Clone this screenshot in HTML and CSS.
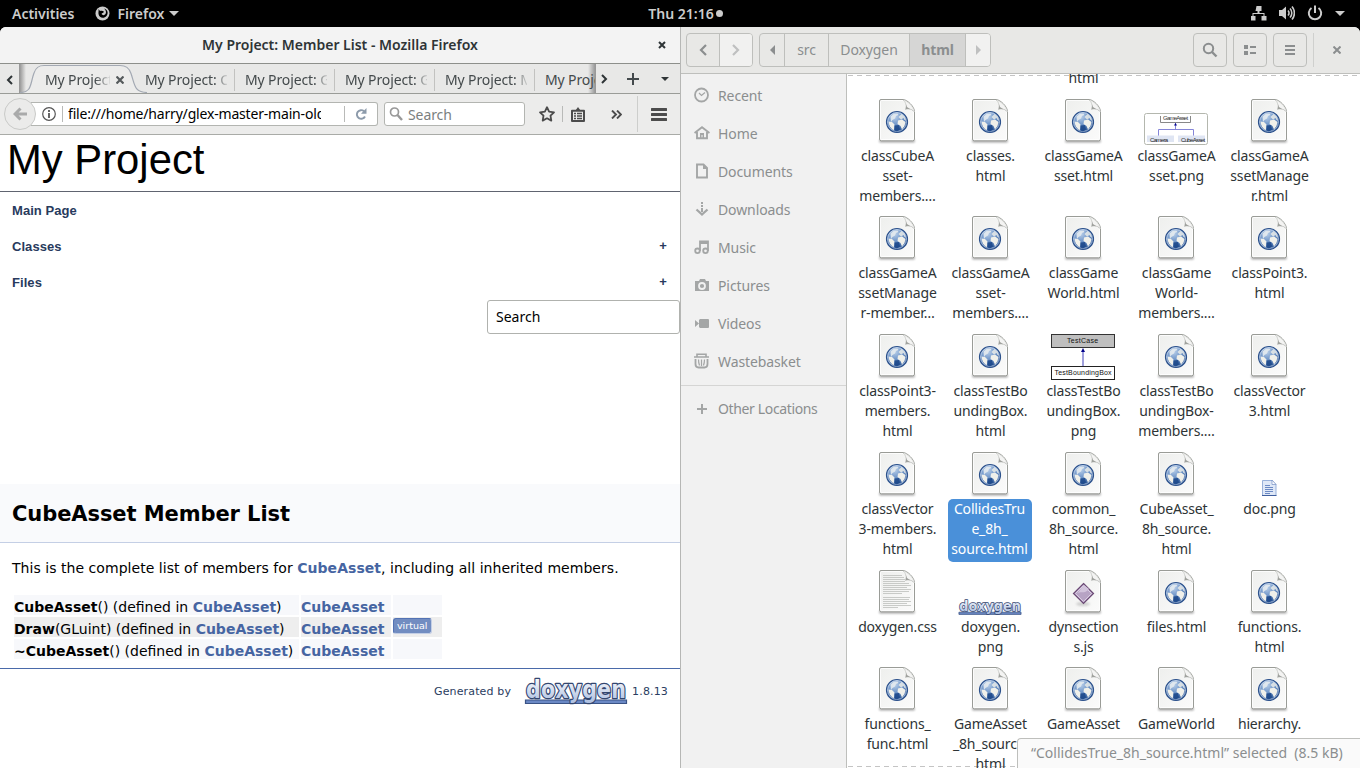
FILE: index.html
```html
<!DOCTYPE html>
<html lang="en">
<head>
<meta charset="utf-8">
<title>My Project: Member List</title>
<link rel="stylesheet" href="styles.css">
</head>
<body>
<svg class="defs" width="0" height="0" aria-hidden="true">
  <defs>
    <linearGradient id="paper" x1="0" y1="0" x2="1" y2="1"><stop offset="0" stop-color="#eeefed"/><stop offset="1" stop-color="#fbfbfb"/></linearGradient>
    <radialGradient id="sea" cx=".4" cy=".25" r=".8"><stop offset="0" stop-color="#b9cfe9"/><stop offset=".5" stop-color="#6a91c6"/><stop offset="1" stop-color="#1f4a8c"/></radialGradient>
    <linearGradient id="logo" x1="0" y1="0" x2="0" y2="1"><stop offset="0" stop-color="#ffffff"/><stop offset="1" stop-color="#a9bcdf"/></linearGradient>
    <filter id="soft" x="-20%" y="-200%" width="140%" height="500%"><feGaussianBlur stdDeviation="1"/></filter>
    <symbol id="page" viewBox="0 0 48 48">
      <rect x="6" y="41.500" width="36" height="3" rx="1.500" fill="#000" opacity=".35" filter="url(#soft)"/>
      <path d="M8 1.500h22c4 0 11.500 7 11.500 12v27.500a1.800 1.800 0 0 1-1.800 1.800H8.300a1.800 1.800 0 0 1-1.800-1.800V3A1.500 1.500 0 0 1 8 1.500z" fill="url(#paper)" stroke="#9a9c97"/>
      <path d="M8.500 2.500h21.500c3 0 10.500 6.500 10.500 11v27a1 1 0 0 1-1 1H8.500a1 1 0 0 1-1-1V3.500z" fill="none" stroke="#fff" opacity=".8"/>
      <path d="M30 2c3 2 3.500 6 2.500 9.500 3-1 7-.5 9 2.500C40.500 8 34 2.500 30 2z" fill="#f4f4f3" stroke="#c3c5c1" stroke-width=".6"/>
      <path d="M32.500 11.500C33.500 8 33 5.500 32 3.500L34 9l7 4.500c-2.500-2.500-5.500-2.800-8.500-2z" fill="#9fa19d"/>
    </symbol>
    <symbol id="html" viewBox="0 0 48 48">
      <use href="#page"/>
      <circle cx="24" cy="24" r="10.500" fill="url(#sea)" stroke="#2d528c" stroke-width="1.200"/>
      <circle cx="24" cy="24" r="9.400" fill="none" stroke="#e4edf8" stroke-width=".8" opacity=".75"/>
      <path d="M17.500 18.500l3-2.500 4-.6 1 1.600-2.500 1-1 2.500-2.500 1.500-1.500 2z" fill="#e9edf0" opacity=".85"/>
      <path d="M15.500 23.500l3.500.5 2.500 2.500-.5 5.500-1.500-.5c-2.200-1.800-3.700-4.500-4-8z" fill="#f0f0ea"/>
      <path d="M25.500 19l3-3 3 2.500 1.500 4-1.500-.5-1-2-2.500 1.500z" fill="#f0f0ea" opacity=".8"/>
      <path d="M25 22.500l4-1 3.500 2.500-1 4-2.500 3.500-1.500-3.500-3-2z" fill="#f0f0ea"/>
      <path d="M21.500 27.500l4.500-.5 1 4.500-3 2-2.500-1z" fill="#1b4788" opacity=".85"/>
    </symbol>
    <symbol id="css" viewBox="0 0 48 48">
      <use href="#page"/>
      <path d="M10 6.500h19M10 8.500h21M10 10.500h22M10 12.500h22M10 14.500h26M10 16.500h28M10 18.500h24M10 20.500h28M10 22.500h26M10 24.500h19M10 28.500h27M10 30.500h26M10 32.500h28M10 34.500h24M10 36.500h28M10 38.500h15" stroke="#c3c5c2" stroke-width=".9"/>
    </symbol>
    <symbol id="js" viewBox="0 0 48 48">
      <use href="#page"/>
      <ellipse cx="24" cy="35" rx="7" ry="2" fill="#888" opacity=".35" filter="url(#soft)"/>
      <path d="M24.500 14.500L34.500 24.500L24.500 34.500L14.500 24.500z" fill="#b7a3c4" stroke="#6b4a74" stroke-width="1.200"/>
      <path d="M24.500 16.500L32.500 24.500L24.500 32.500L16.500 24.500z" fill="none" stroke="#dccfe4" stroke-width="1"/>
      <path d="M18 25c4-4 7 1 12-5l-5-4z" fill="#d2c4dc"/>
    </symbol>
    <symbol id="docpng" viewBox="0 0 48 48">
      <path d="M17.500 29.500h9.500l4 4v11H17.500z" fill="#dfe8f7" stroke="#8fa9d6" stroke-width=".9"/>
      <path d="M27 29v4.500h4z" fill="#fff" stroke="#7590c4" stroke-width=".7"/>
      <path d="M20 34.500h5M20 36.500h8M20 38.500h8M20 40.500h8M20 42.500h5" stroke="#5f7fbd" stroke-width=".9"/>
      <path d="M17 44.500h14.500" stroke="#3f5f9f"/>
    </symbol>
    <symbol id="doxygen" viewBox="0 0 104 29">
      <path d="M1.500 23h101v3.500h-101z" fill="#6a88c4" stroke="#3a5385" stroke-width="1.200"/>
      <text x="2" y="21" textLength="100" lengthAdjust="spacingAndGlyphs" font-family="DejaVu Sans" font-weight="bold" font-size="24" fill="url(#logo)" stroke="#33466f" stroke-width="2.600" stroke-linejoin="round" paint-order="stroke">doxygen</text>
    </symbol>
  </defs>
</svg>

<div class="desktop">
  <header class="topbar">
    <div class="top-left">
      <span class="activities">Activities</span>
      <svg class="fox" width="15" height="15" viewBox="0 0 15 15"><circle cx="7.500" cy="7.500" r="7" fill="#ccc"/><path d="M3.500 3L5 5c2-.5 3 0 4 .8C8.500 7 7 7 6.500 8c1 1.500 3 1.500 4 0 1-1.800.5-4-1.500-5.500 4 1 4.500 5 2.500 7.500-2.500 3-7.500 2-8-2C3.300 6 3.800 5 3.500 3z" fill="#000"/></svg>
      <span class="appname">Firefox</span>
      <i class="caret"></i>
    </div>
    <div class="clock">Thu 21:16<i class="dot"></i></div>
    <div class="top-right">
      <svg width="16" height="16" viewBox="0 0 16 16" fill="#ccc"><path d="M5.500 1h5v5h-2v2h5v3h2v4.500h-5V11h2V9h-10v2h2v4.500h-5V11h2V8h5V6h-2z"/></svg>
      <svg width="16" height="16" viewBox="0 0 16 16"><path d="M0 5h3l4-3.500v13L3 11H0z" fill="#ccc"/><path d="M9 5.500a3.500 3.500 0 0 1 0 5M11 3.500a6.500 6.500 0 0 1 0 9M13 1.500a10 10 0 0 1 0 13" fill="none" stroke="#ccc" stroke-width="1.600"/></svg>
      <svg width="16" height="16" viewBox="0 0 16 16" fill="none" stroke="#ccc" stroke-width="2"><path d="M4.500 3a6.200 6.200 0 1 0 7 0M8 .5v7.500"/></svg>
      <i class="caret"></i>
    </div>
  </header>

  <div class="windows">
    <section class="firefox">
      <div class="ff-title"><span>My Project: Member List - Mozilla Firefox</span>
        <svg width="8" height="8" viewBox="0 0 8 8"><path d="M1 1l6 6M7 1L1 7" stroke="#2e3436" stroke-width="2"/></svg>
      </div>
      <div class="tabs">
        <div class="scroll-l"><svg width="7" height="10" viewBox="0 0 7 10"><path d="M6 1L2 5l4 4" fill="none" stroke="#2e3436" stroke-width="2"/></svg></div>
        <div class="tab-strip">
          <div class="tab active">
            <svg class="tab-shape" width="130" height="30" viewBox="0 0 130 30"><path d="M0 29C12 29 10 20 14 9c2-6 5-7.500 10-7.500h76c6 0 9 2 11 8C115 21 114 28.500 127 29v1H0z" fill="#ececeb"/><path d="M0 28.500C12 28.500 10 20 14 9c2-6 5-7.500 10-7.500h76c6 0 9 2 11 8C115 21 114 28 127 28.500" fill="none" stroke="#a3a9b3" stroke-width="1.200"/></svg>
            <span class="tab-label">My Project:</span>
            <svg class="tab-x" width="8" height="8" viewBox="0 0 8 8"><path d="M.5 .5l7 7M7.500 .5l-7 7" stroke="#555a5c" stroke-width="2.200"/></svg>
          </div>
          <div class="tab"><span class="tab-label">My Project: C</span></div>
          <div class="tab"><span class="tab-label">My Project: G</span></div>
          <div class="tab"><span class="tab-label">My Project: G</span></div>
          <div class="tab"><span class="tab-label">My Project: M</span></div>
          <div class="tab last"><span class="tab-label">My Project</span></div>
        </div>
        <div class="tab-tools">
          <svg width="7" height="10" viewBox="0 0 7 10"><path d="M1 1l4 4-4 4" fill="none" stroke="#2e3436" stroke-width="2"/></svg>
          <svg width="12" height="12" viewBox="0 0 12 12"><path d="M6 0v12M0 6h12" stroke="#444a4d" stroke-width="2"/></svg>
          <i class="caret dark"></i>
        </div>
      </div>
      <div class="navbar">
        <div class="back"><svg width="14" height="14" viewBox="0 0 14 14"><path d="M7.500 1.500L2 7l5.500 5.500M2 7h12" fill="none" stroke="#a9aaaa" stroke-width="3"/></svg></div>
        <div class="urlbar">
          <svg width="14" height="14" viewBox="0 0 14 14"><circle cx="7" cy="7" r="6.300" fill="none" stroke="#555" stroke-width="1.200"/><path d="M7 6v5M7 3v2" stroke="#555" stroke-width="1.800"/></svg>
          <i class="sep"></i><span class="url">file:///home/harry/glex-master-main-old</span><i class="sep"></i>
          <svg class="reload" width="12" height="12" viewBox="0 0 12 12"><path d="M9 3.200A4.300 4.300 0 1 0 10 8.500" fill="none" stroke="#8d9bab" stroke-width="1.900"/><path d="M11.500 0v5.800H6z" fill="#8d9bab"/></svg>
        </div>
        <div class="searchbar"><svg width="14" height="14" viewBox="0 0 14 14"><circle cx="5.500" cy="5" r="4" fill="none" stroke="#999" stroke-width="1.700"/><path d="M8.500 8l4.500 5" stroke="#999" stroke-width="2.400"/></svg><span>Search</span></div>
        <svg class="star" width="16" height="16" viewBox="0 0 16 16"><path d="M8 1.200l2.100 4.400 4.900.7-3.500 3.400.8 4.900L8 12.300l-4.300 2.300.8-4.900L1 6.300l4.900-.7z" fill="none" stroke="#4c4c4c" stroke-width="1.800" stroke-linejoin="round"/></svg>
        <i class="sep nav1"></i>
        <svg class="clip" width="14" height="15" viewBox="0 0 14 15"><path d="M1 3.800h12v10.200H1z" fill="none" stroke="#4c4c4c" stroke-width="2" stroke-linejoin="round"/><path d="M4.500 3.500L7 0l2.500 3.500z" fill="#4c4c4c"/><path d="M3 6.500h2m1 0h5M3 9h2m1 0h5M3 11.500h2m1 0h5" stroke="#4c4c4c" stroke-width="1.300"/></svg>
        <svg class="more" width="11" height="9" viewBox="0 0 11 9"><path d="M1 .5l4 4-4 4M6 .5l4 4-4 4" fill="none" stroke="#4c4c4c" stroke-width="1.900"/></svg>
        <i class="sep nav2"></i>
        <svg class="burger" width="16" height="13" viewBox="0 0 16 13"><path d="M1 1.500h14M1 6.500h14M1 11.500h14" stroke="#4c4c4c" stroke-width="3" stroke-linecap="round"/></svg>
      </div>

      <main class="doc">
        <h1 class="project">My Project</h1>
        <nav class="menu">
          <div>Main Page</div>
          <div>Classes<b>+</b></div>
          <div>Files<b>+</b></div>
        </nav>
        <div class="docsearch">Search</div>
        <div class="doc-head"><h2>CubeAsset Member List</h2></div>
        <p class="intro">This is the complete list of members for <a>CubeAsset</a>, including all inherited members.</p>
        <div class="members">
          <span><b>CubeAsset</b>() (defined in <a>CubeAsset</a>)</span><span><a>CubeAsset</a></span><span></span>
          <span class="alt"><b>Draw</b>(GLuint) (defined in <a>CubeAsset</a>)</span><span class="alt"><a>CubeAsset</a></span><span class="alt"><em>virtual</em></span>
          <span><b>~CubeAsset</b>() (defined in <a>CubeAsset</a>)</span><span><a>CubeAsset</a></span><span></span>
        </div>
        <footer class="generated"><span>Generated by</span><svg width="104" height="29"><use href="#doxygen"/></svg><span>1.8.13</span></footer>
      </main>
    </section>

    <section class="files">
      <div class="headerbar">
        <div class="group">
          <span class="w33"><svg width="8" height="12" viewBox="0 0 8 12"><path d="M7 1L2 6l5 5" fill="none" stroke="#8b8e8f" stroke-width="2.200"/></svg></span>
          <span class="w33 off"><svg width="8" height="12" viewBox="0 0 8 12"><path d="M1 1l5 5-5 5" fill="none" stroke="#bfc0c0" stroke-width="2.200"/></svg></span>
        </div>
        <div class="group path">
          <span class="w25"><svg width="5" height="10" viewBox="0 0 5 10"><path d="M5 0v10L0 5z" fill="#8b8e8f"/></svg></span>
          <span class="w44">src</span><span class="w81">Doxygen</span><span class="w56 on">html</span>
          <span class="w25 off"><svg width="5" height="10" viewBox="0 0 5 10"><path d="M0 0v10l5-5z" fill="#bfc0c0"/></svg></span>
        </div>
        <div class="tools">
          <span><svg width="16" height="16" viewBox="0 0 16 16" fill="none" stroke="#8b8e8f"><circle cx="6.500" cy="6.500" r="4.700" stroke-width="2"/><path d="M10 10l4.500 4.500" stroke-width="2.400"/></svg></span>
          <span><svg width="12" height="10" viewBox="0 0 12 10" fill="#8b8e8f"><path d="M0 0h4v4H0zM0 6h4v4H0zM6 1h6v2H6zM6 7h6v2H6z"/></svg></span>
          <span><svg width="10" height="10" viewBox="0 0 10 10" fill="#8b8e8f"><path d="M0 0h10v2H0zM0 4h10v2H0zM0 8h10v2H0z"/></svg></span>
        </div>
        <i class="hsep"></i>
        <svg class="close" width="8" height="8" viewBox="0 0 8 8"><path d="M.5 .5l7 7M7.500 .5l-7 7" stroke="#8b8e8f" stroke-width="2"/></svg>
      </div>
      <div class="files-body">
        <aside class="sidebar">
          <div><svg width="16" height="16" viewBox="0 0 16 16" fill="none" stroke="#a4a6a6"><circle cx="7.500" cy="8" r="6.500" stroke-width="1.800"/><path d="M5 6l2.500 2.500 3.500-3" stroke-width="1.200"/></svg>Recent</div>
          <div><svg width="16" height="16" viewBox="0 0 16 16"><path d="M.5 8L8 2.200 15.500 8M3 7v6.200h10V7" fill="none" stroke="#a4a6a6" stroke-width="1.900"/><path d="M6 8h4v5H8.500v-3h-1v3H6z" fill="#a4a6a6"/></svg>Home</div>
          <div><svg width="16" height="16" viewBox="0 0 16 16"><path d="M3 1.500h6.500L13 5v9.500H3z" fill="none" stroke="#a4a6a6" stroke-width="1.900"/><path d="M9 1v5h5z" fill="#a4a6a6"/></svg>Documents</div>
          <div><svg width="16" height="16" viewBox="0 0 16 16" fill="none" stroke="#a4a6a6"><path d="M8 1v2M8 4v2M8 7v4" stroke-width="2"/><path d="M2.500 8.500L8 13.500l5.500-5" stroke-width="2.300"/></svg>Downloads</div>
          <div><svg width="16" height="16" viewBox="0 0 16 16" fill="none" stroke="#a4a6a6" stroke-width="1.800"><path d="M6 12V2.500h8V12M6 4h8"/><circle cx="3.500" cy="11.800" r="2.300"/><circle cx="11.500" cy="11.800" r="2.300"/></svg>Music</div>
          <div><svg width="16" height="16" viewBox="0 0 16 16"><path d="M1 4h4l1-2h5l1 2h3v10H1z" fill="#a4a6a6"/><circle cx="8" cy="9" r="3" fill="#a4a6a6" stroke="#f1f1f1" stroke-width="1.800"/></svg>Pictures</div>
          <div><svg width="16" height="16" viewBox="0 0 16 16" fill="#a4a6a6"><path d="M1 5l4 3.500L1 12zM5 5l1-1h8.500l.5 1v7.500l-1 .5H6l-1-1z"/></svg>Videos</div>
          <div><svg width="16" height="16" viewBox="0 0 16 16" fill="none" stroke="#a4a6a6"><path d="M3 3.500V1.200h9v2.300M0 4h15" stroke-width="1.600"/><path d="M1.500 6v5c0 2.500 1 3.500 3 3.500h6c2 0 3-1 3-3.500V6" stroke-width="1.800"/><path d="M4.500 6.500c0 2 .3 4 1 6M7.500 6.500v6.500M10.500 6.500c0 2-.3 4-1 6" stroke-width="1.200"/></svg>Wastebasket</div>
          <div class="other"><svg width="16" height="16" viewBox="0 0 16 16"><path d="M8 3v10M3 8h10" stroke="#a4a6a6" stroke-width="2"/></svg>Other Locations</div>
        </aside>
        <div class="canvas">
          <div class="cut">html</div>
          <div class="grid" id="grid"></div>
          <div class="status">“CollidesTrue_8h_source.html” selected&nbsp; (8.5 kB)</div>
        </div>
      </div>
    </section>
  </div>
</div>
<script src="files.js"></script>
</body>
</html>
```
FILE: styles.css
```css
* { box-sizing: border-box; }
body { margin: 0; font-family: "Noto Sans", "Open Sans", sans-serif; font-size: 14px; color: #2e3436; background: #000; overflow: hidden; }
svg { display: block; flex: none; }
.defs { position: absolute; }
i { display: block; flex: none; }
.desktop { width: 1360px; height: 768px; display: flex; flex-direction: column; overflow: hidden; white-space: nowrap; }

.topbar { height: 27px; flex: none; background: #000; color: #ccc; font-weight: 600; display: grid; grid-template-columns: 1fr auto 1fr; align-items: center; padding: 0 15px 1px 12px; }
.top-left, .top-right { display: flex; align-items: center; }
.fox { margin: 0 7px 0 21px; }
.caret { border: 5px solid transparent; border-top-color: #ccc; border-bottom: 0; margin-left: 5px; }
.caret.dark { border-width: 4px 4px 0; border-top-color: #2e3436; margin: 0; }
.clock { display: flex; align-items: center; margin-left: 14px; }
.dot { width: 7px; height: 7px; border-radius: 50%; background: #ccc; margin-left: 2px; }
.top-right { justify-content: flex-end; gap: 12px; }
.top-right svg { margin-right: 1px; margin-left: -1px; }
.top-right .caret { margin-left: -1px; }

.windows { flex: 1; display: flex; min-height: 0; }
.firefox { width: 680px; background: #fff; display: flex; flex-direction: column; border-radius: 6px 0 0 0; overflow: hidden; }
.ff-title { height: 37px; background: #f3f3f3; border-bottom: 1px solid #8d8f8b; display: grid; grid-template-columns: 1fr 8px; align-items: center; padding: 0 14px 1px 22px; text-align: center; font-weight: 600; }
.tabs { height: 30px; background: #e8e8e7; border-bottom: 1px solid #9a9c98; display: flex; }
.scroll-l { width: 20px; padding: 11px 0 0 6px; border-right: 1px solid #999; }
.tab-strip { width: 575px; display: flex; overflow: hidden; background: linear-gradient(90deg, #999, #e8e8e700 6px), linear-gradient(270deg, #999, #e8e8e700 7px); }
.tab { width: 100px; flex: none; position: relative; padding: 6px 0 0 10px; line-height: 20px; letter-spacing: -.12px; }
.tab + .tab { background: linear-gradient(#c2c2c0, #c2c2c0) right 5px / 1px 22px no-repeat; }
.tab.active { width: 115px; padding-left: 25px; }
.tab.last { background: none; }
.tab-shape { position: absolute; left: 0; top: 0; }
.tab-label { display: block; position: relative; width: 82px; overflow: hidden; color: #444a4c; -webkit-mask-image: linear-gradient(90deg, #000 70px, transparent 84px); mask-image: linear-gradient(90deg, #000 70px, transparent 84px); }
.active .tab-label { width: 65px; -webkit-mask-image: linear-gradient(90deg, #000 50px, transparent 67px); mask-image: linear-gradient(90deg, #000 50px, transparent 67px); }
.last .tab-label { -webkit-mask-image: none; mask-image: none; }
.tab-x { position: absolute; left: 96px; top: 12px; }
.tab-tools { flex: 1; display: flex; align-items: center; gap: 19px; padding-left: 5px; border-left: 1px solid #999; }
.tab-tools .caret { margin-left: 3px; }

.navbar { height: 41px; background: #ececeb; border-bottom: 1px solid #a9aba7; display: flex; align-items: center; padding-left: 4px; }
.back { width: 32px; height: 32px; border: 1px solid #c9cac8; border-radius: 50%; background: #ebebea; display: grid; place-items: center; flex: none; z-index: 1; }
.urlbar { width: 347px; height: 24px; margin-left: -5px; border: 1px solid #b3b5b1; border-left: 0; border-radius: 0 3px 3px 0; background: #fff; display: flex; align-items: center; padding-left: 11px; color: #000; }
.sep { width: 1px; height: 16px; background: #b9bab8; }
.urlbar .sep { margin-left: 6px; }
.urlbar .url { width: 253px; flex: none; overflow: hidden; margin-left: 5px; line-height: 20px; letter-spacing: -.18px; }
.urlbar .url + .sep { margin-left: 23px; }
.reload { margin-left: 10px; }
.searchbar { width: 141px; height: 24px; margin-left: 6px; border: 1px solid #b3b5b1; border-radius: 3px; background: #fff; display: flex; align-items: center; gap: 5px; padding-left: 4px; color: #7b7f80; letter-spacing: -.1px; }
.star { margin-left: 14px; }
.nav1 { margin: 0 8px 0 7px; }
.more { margin-left: 26px; }
.nav2 { height: 36px; margin: 0 13px 0 15px; opacity: .6; }

.doc { flex: 1; font-family: "DejaVu Sans", sans-serif; font-size: 14px; color: #000; display: flex; flex-direction: column; }
.doc a { color: #4665a2; font-weight: bold; }
.project { margin: 0; height: 57px; padding: 1px 0 0 7px; border-bottom: 1px solid #606470; font: 41.8px/47px "Liberation Sans", Arial, sans-serif; }
.menu { font: bold 13px/36px "Liberation Sans", Arial, sans-serif; color: #283a5d; padding: 1px 13px 0 12px; letter-spacing: .06px; }
.menu div { display: flex; justify-content: space-between; }
.menu b { line-height: 34px; }
.docsearch { width: 193px; height: 34px; margin-top: -1px; align-self: flex-end; border: 1px solid #b0b2ae; border-radius: 3px; padding-left: 8px; font: 14px/31px "Noto Sans", sans-serif; background: #fff; }
.doc-head { height: 59px; margin-top: 150px; background: #f9fafc; border-bottom: 1px solid #c4cfe5; padding-left: 12px; }
.doc-head h2 { margin: 0; font-size: 21px; line-height: 60px; letter-spacing: -.08px; height: 58px; }
.intro { margin: 15px 0 17px 12px; line-height: 20px; letter-spacing: .042px; }
.members { display: grid; grid-template-columns: 285px 90px 49px; grid-auto-rows: 20px; gap: 2px; margin-left: 14px; line-height: 24.500px; }
.members span { background: #f7f8fb; }
.members .alt { background: #eee; }
.members em { display: block; width: 39px; height: 16px; margin-top: 1px; background: #728dc1; border: 1px solid #5373b4; border-right-color: #c4cfe5; border-bottom-color: #c4cfe5; border-radius: 3px; color: #fff; font: 9.500px/14px "DejaVu Sans", sans-serif; padding-left: 3px; }
.generated { margin-top: 9px; border-top: 1px solid #4a6aaa; display: flex; justify-content: flex-end; align-items: center; padding: 8px 12px 0 0; font-size: 11px; color: #2a3d61; letter-spacing: .15px; }
.generated svg { margin: 0 4px 0 13px; }

.files { width: 680px; border-left: 1px solid #b6b7b5; display: flex; flex-direction: column; border-radius: 0 6px 0 0; overflow: hidden; color: #8b8e8f; background: #fff; letter-spacing: -.1px; }
.headerbar { height: 47px; flex: none; background: #e8e8e6; border-bottom: 1px solid #bebfbc; display: flex; align-items: center; padding: 0 19px 0 5px; }
.group { display: flex; border: 1px solid #bebfbc; border-radius: 4px; height: 34px; overflow: hidden; margin-right: 6px; }
.group span { display: grid; place-items: center; border-left: 1px solid #bebfbc; padding-bottom: 1px; }
.group span:first-child { border-left: 0; }
.w33 { width: 33px; }
.group .w33:first-child { width: 32px; }
.w25 { width: 25px; }
.group .w25:first-child { width: 24px; }
.w44 { width: 44px; }
.w81 { width: 81px; }
.w56 { width: 56px; }
.off { background: #f1f1f0; }
.on { background: #d6d6d5; font-weight: bold; }
.tools { display: flex; gap: 6px; margin-left: auto; }
.tools span { width: 34px; height: 34px; border: 1px solid #bebfbc; border-radius: 4px; display: grid; place-items: center; }
.hsep { width: 1px; height: 34px; background: #cfd0ce; margin: 0 19px 0 6px; }
.files-body { flex: 1; display: flex; min-height: 0; }
.sidebar { width: 166px; flex: none; background: #f1f1f1; border-right: 1px solid #bebfbc; padding-top: 2px; }
.sidebar div { height: 38px; display: flex; align-items: center; gap: 8px; padding-left: 13px; }
.sidebar .other { margin-top: 5px; height: 46px; border-top: 1px solid #d5d5d4; letter-spacing: -.36px; }
.canvas { flex: 1; position: relative; overflow: hidden; background: repeating-linear-gradient(90deg, #c4c4c4 0 5px, transparent 5px 9px) 1px 1px / 100% 1px no-repeat, repeating-linear-gradient(90deg, #c4c4c4 0 5px, transparent 5px 9px) 1px 692px / 100% 1px no-repeat, #fff; color: #2e3436; padding-left: 3px; }
.cut { height: 24px; line-height: 20px; width: 93px; margin-left: 187px; text-align: center; margin-top: -6px; }
.grid { display: grid; grid-template-columns: repeat(5, 93px); grid-template-rows: 117px 118px 118px 118px 97px 120px; margin-top: 6px; }
.item { display: flex; flex-direction: column; align-items: center; line-height: 20px; text-align: center; }
.item .label { padding-left: 2px; letter-spacing: -.15px; }
.item.selected .label { width: 84px; padding-left: 0; background: #4a90d9; color: #fff; border-radius: 5px; height: 63px; }
.thumb { width: 64px; height: 48px; display: flex; align-items: flex-end; justify-content: center; }
.thumb .raised { margin-bottom: 1px; }
.status { position: absolute; right: 0; bottom: 0; width: 343px; height: 30px; background: #fafafa; border: 1px solid #bebfbc; border-right: 0; border-bottom: 0; border-radius: 4px 0 0 0; color: #8b8e8f; line-height: 28px; padding-left: 13px; letter-spacing: 0; }
```
FILE: files.js
```js
// Each entry: icon name, then the label with "|" at its line breaks.
const files = [
  ["html", "classCubeA|sset-|members.…"], ["html", "classes.|html"], ["html", "classGameA|sset.html"], ["asset", "classGameA|sset.png"], ["html", "classGameA|ssetManage|r.html"],
  ["html", "classGameA|ssetManage|r-member…"], ["html", "classGameA|sset-|members.…"], ["html", "classGame|World.html"], ["html", "classGame|World-|members.…"], ["html", "classPoint3.|html"],
  ["html", "classPoint3-|members.|html"], ["html", "classTestBo|undingBox.|html"], ["test", "classTestBo|undingBox.|png"], ["html", "classTestBo|undingBox-|members.…"], ["html", "classVector|3.html"],
  ["html", "classVector|3-members.|html"], ["html", "CollidesTru|e_8h_|source.html", true], ["html", "common_|8h_source.|html"], ["html", "CubeAsset_|8h_source.|html"], ["docpng", "doc.png"],
  ["css", "doxygen.css"], ["logo", "doxygen.|png"], ["js", "dynsection|s.js"], ["html", "files.html"], ["html", "functions.|html"],
  ["html", "functions_|func.html"], ["html", "GameAsset|_8h_source.|html"], ["html", "GameAsset"], ["html", "GameWorld"], ["html", "hierarchy."]
];
const thumbs = {
  asset: '<svg width="64" height="33" viewBox="0 0 64 33" font-family="Liberation Sans" font-size="6"><rect x=".5" y=".5" width="63" height="31" rx="2" fill="#fff" stroke="#b4b7ae"/><path d="M16.500 3v6.500h30V3" fill="none" stroke="#888"/><text x="19" y="6.500" textLength="25" fill="#333">GameAsset</text><path d="M31.500 10v6.500M14.500 23v-6.500h35V23" fill="none" stroke="#8585d8"/><path d="M30 12.500l1.500-2.500 1.500 2.500z" fill="#00008b"/><path d="M3 22.500h27V29H3zM34 22.500h27V29H34z" fill="#dfe5f3"/><text x="6" y="28.500" textLength="18" fill="#222">Camera</text><text x="37" y="28.500" textLength="24" fill="#222">CubeAsset</text></svg>',
  test: '<svg class="raised" width="64" height="46" viewBox="0 0 64 46" font-family="Liberation Sans" font-size="7"><rect x=".5" y=".5" width="63" height="13" fill="#bfbfbf" stroke="#333"/><text x="16" y="9" textLength="31" fill="#111">TestCase</text><path d="M32 16v16" stroke="#8080d0" stroke-width="1.500"/><path d="M30 18l2-4 2 4z" fill="#00008b"/><rect x=".5" y="32.500" width="63" height="13" fill="#fff" stroke="#222"/><text x="3.500" y="41" textLength="57" fill="#111">TestBoundingBox</text></svg>',
  logo: '<svg class="raised" width="64" height="18" viewBox="0 0 104 29"><use href="#doxygen"/></svg>'
};
document.getElementById("grid").innerHTML = files.map(([icon, label, selected]) => {
  const art = thumbs[icon] || `<svg width="48" height="48"><use href="#${icon}"/></svg>`;
  return `<div class="item${selected ? " selected" : ""}"><div class="thumb">${art}</div><div class="label">${label.split("|").join("<br>")}</div></div>`;
}).join("");
```
